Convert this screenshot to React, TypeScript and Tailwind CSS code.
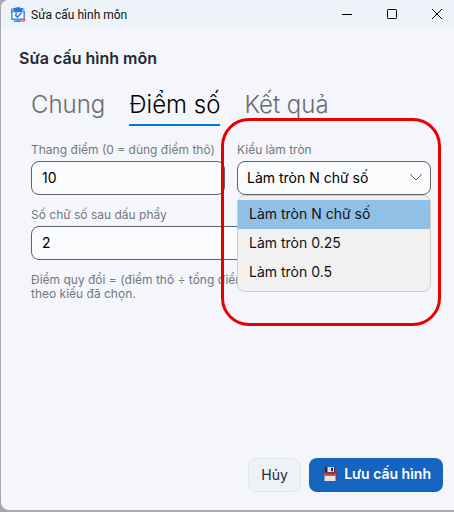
import React, { useState } from 'react';

const TABS = ['Chung', 'Điểm số', 'Kết quả'];
const ROUNDING_TYPES = ['Làm tròn N chữ số', 'Làm tròn 0.25', 'Làm tròn 0.5'];

const FIELD_CLASS =
  'block h-[34px] w-full rounded-lg border border-[#5f6368] bg-[#fafbfd] text-sm text-black outline-none';

const AppIcon: React.FC = () => (
  <svg viewBox="0 0 16 16" className="h-4 w-4" aria-hidden="true">
    <rect x="1.8" y="4.4" width="12.4" height="8" rx="0.6" fill="#fff" stroke="#3d92fb" strokeWidth="1.6" />
    <path d="M8 0l7 2-7 2.2L1 2z" fill="#2277e6" />
    <path d="M4 2.4h8v2.2c-2.4 1-5.6 1-8 0z" fill="#2277e6" />
    <path d="M1.5 2v4" stroke="#2277e6" strokeWidth="1" />
    <path d="M5 7.6l2.4 2.4L11.6 5.8" fill="none" stroke="#2c83f0" strokeWidth="1.6" />
    <path d="M5.4 5.6l1.8 1.6" stroke="#e0393e" strokeWidth="1.2" />
    <path d="M6.5 12.4h3v1.4h-3zM4 13.6h7v1.4H4z" fill="#3d92fb" />
    <path d="M10.6 13l1.8-1.7h1.8l1.4 1.7-1.4 1.7h-1.8z" fill="#f4525c" />
    <circle cx="13.2" cy="13" r="0.6" fill="#fff" />
  </svg>
);

const FloppyIcon: React.FC = () => (
  <svg viewBox="0 0 14 14" className="h-[14px] w-[14px]" aria-hidden="true">
    <path d="M0 0h13l1 1v13H0z" fill="#574872" />
    <path d="M2 0h9.5v5H2z" fill="#33234d" />
    <path d="M4.5 0h6.5v5H4.5z" fill="#e4e2ea" />
    <path d="M8 0.8h2v3.4H8z" fill="#33234d" />
    <path d="M1.5 7h11v7h-11z" fill="#e6e3e6" />
    <path d="M1.5 7h11v2h-11z" fill="#ee4136" />
  </svg>
);

/**
 * Window caption with the app icon and the system buttons
 */
const TitleBar: React.FC = () => (
  <header className="flex h-[30px] items-center bg-[#edf3f8] pl-[9px]">
    <AppIcon />
    <span className="ml-[5px] font-['Roboto','Noto_Sans',sans-serif] text-xs text-[#111]">Sửa cấu hình môn</span>
    <div className="-mr-[6px] ml-auto flex h-full">
      <button aria-label="Thu nhỏ" className="flex w-[45px] items-center justify-center">
        <svg viewBox="0 0 10 10" className="h-[10px] w-[10px]">
          <path d="M0 4.5h10" stroke="#000" />
        </svg>
      </button>
      <button aria-label="Phóng to" className="flex w-[45px] items-center justify-center pb-[2px]">
        <svg viewBox="0 0 10 10" className="h-[10px] w-[10px]">
          <rect x="0.5" y="0.5" width="9" height="9" rx="0.8" fill="none" stroke="#000" />
        </svg>
      </button>
      <button aria-label="Đóng" className="flex w-[46px] items-center justify-center pb-[2px]">
        <svg viewBox="0 0 10 10" className="h-[10px] w-[10px]">
          <path d="M0 0l10 10M10 0L0 10" stroke="#000" />
        </svg>
      </button>
    </div>
  </header>
);

const App: React.FC = () => {
  const [activeTab, setActiveTab] = useState('Điểm số');
  const [scale, setScale] = useState('10');
  const [digits, setDigits] = useState('2');
  const [rounding, setRounding] = useState(ROUNDING_TYPES[0]);

  return (
    <div className="flex min-h-screen flex-col bg-[#a9a9ad] pb-[2px] pl-px font-['Inter','Noto_Sans',sans-serif]">
      <div className="flex flex-1 flex-col overflow-hidden rounded-l-lg bg-[#f4f6fb]">
        <TitleBar />

        <main className="flex flex-1 flex-col pr-[11px] pb-[18px] pl-[18px]">
          <h1 className="mt-4 text-base leading-6 font-semibold text-[#1f2937]">Sửa cấu hình môn</h1>

          <div className="px-3">
            <div role="tablist" className="mt-4 flex gap-6">
              {TABS.map((tab) => (
                <button
                  key={tab}
                  role="tab"
                  aria-selected={tab === activeTab}
                  onClick={() => setActiveTab(tab)}
                  className={`h-10 border-b-2 text-2xl leading-9 font-light whitespace-nowrap ${
                    tab === activeTab ? 'border-[#0078d4] text-black' : 'border-transparent text-[#6b6b6f]'
                  }`}
                >
                  {tab}
                </button>
              ))}
            </div>

            <div className="mt-4 grid grid-cols-2 gap-3">
              <div>
                <label htmlFor="scale" className="mb-1 block text-xs leading-[15px] whitespace-nowrap text-[#737780]">
                  Thang điểm (0 = dùng điểm thô)
                </label>
                <input
                  id="scale"
                  value={scale}
                  onChange={(e) => setScale(e.target.value)}
                  className={`${FIELD_CLASS} px-[10px] pb-[2px]`}
                />
              </div>

              <div className="relative">
                <label htmlFor="rounding" className="mb-1 block text-xs leading-[15px] text-[#737780]">
                  Kiểu làm tròn
                </label>
                <div className="relative">
                  <select
                    id="rounding"
                    value={rounding}
                    onChange={(e) => setRounding(e.target.value)}
                    className={`${FIELD_CLASS} appearance-none px-[9px]`}
                  >
                    {ROUNDING_TYPES.map((type) => (
                      <option key={type}>{type}</option>
                    ))}
                  </select>
                  <svg
                    viewBox="0 0 12 7"
                    className="pointer-events-none absolute top-[13px] right-[9px] h-[7px] w-3"
                    aria-hidden="true"
                  >
                    <path d="M0.5 0.5 6 6l5.5-5.5" fill="none" stroke="#55585e" />
                  </svg>

                  {/* Open list of rounding types */}
                  <ul
                    role="listbox"
                    aria-label="Kiểu làm tròn"
                    className="absolute top-full right-0 left-0 z-10 rounded-lg border border-[#cdcdd0] bg-[#f1f1f1] py-1"
                  >
                    {ROUNDING_TYPES.map((type) => (
                      <li
                        key={type}
                        role="option"
                        aria-selected={type === rounding}
                        onClick={() => setRounding(type)}
                        className={`h-[29px] px-[11px] text-sm leading-[27px] text-[#111] ${
                          type === rounding ? 'bg-[#91c0e7]' : ''
                        }`}
                      >
                        {type}
                      </li>
                    ))}
                  </ul>
                </div>

                {/* Highlight ring around the rounding field */}
                <div className="pointer-events-none absolute -top-6 -right-[10px] -bottom-[131px] -left-4 z-20 rounded-[28px] border-3 border-[#e80000]" />
              </div>

              <div className="col-span-2">
                <label htmlFor="digits" className="mb-1 block text-xs leading-[15px] text-[#737780]">
                  Số chữ số sau dấu phẩy
                </label>
                <input
                  id="digits"
                  value={digits}
                  onChange={(e) => setDigits(e.target.value)}
                  className={`${FIELD_CLASS} px-[10px] pb-[2px]`}
                />
              </div>
            </div>

            <p className="mt-[13px] text-xs leading-[14px] text-[#737780]">
              Điểm quy đổi = (điểm thô ÷ tổng điểm) × thang điểm, làm tròn
              <br />
              theo kiểu đã chọn.
            </p>
          </div>

          <footer className="mt-auto flex justify-end gap-2">
            <button className="h-[34px] min-w-[53px] rounded-lg border border-[#e1e5ec] bg-[#eef1f6] px-3 text-sm text-[#1f2937]">
              Hủy
            </button>
            <button className="flex h-[34px] items-center gap-[7px] rounded-lg bg-[#1565c0] pr-3 pb-[2px] pl-[14px] text-sm font-semibold text-white">
              <FloppyIcon />
              Lưu cấu hình
            </button>
          </footer>
        </main>
      </div>
    </div>
  );
};

export default App;
